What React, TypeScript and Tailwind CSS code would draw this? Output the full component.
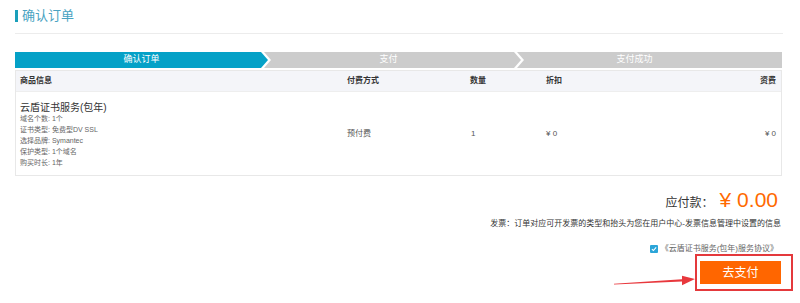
import React from "react";

const FONT = '"Liberation Sans","Noto Sans CJK SC",sans-serif';

export default function App() {
  return (
    <div
      className="relative w-[800px] h-[303px] overflow-hidden bg-white text-[#333]"
      style={{ fontFamily: FONT }}
    >
      <div className="pl-[15px] w-[782px]">
        {/* Title */}
        <div className="pt-[8px] flex items-center h-[24px] gap-[4px]">
          <div className="w-[3px] h-[12px] bg-[#1a9fba]" />
          <span className="text-[13px] leading-[16px] text-[#4aa3c2]">确认订单</span>
        </div>
        <div className="mt-[9px] h-px bg-[#ececec] w-[768px]" />

        {/* Steps */}
        <div className="mt-[18px] flex h-[16px] w-[767px] text-[9px] text-white">
          <div
            className="w-[253px] h-full bg-[#05a1c7] flex items-center justify-center"
            style={{ clipPath: "polygon(0 0, calc(100% - 7px) 0, 100% 50%, calc(100% - 7px) 100%, 0 100%)" }}
          >
            确认订单
          </div>
          <div
            className="-ml-[4px] w-[257px] h-full bg-[#cccccc] flex items-center justify-center pr-[8px]"
            style={{ clipPath: "polygon(0 0, calc(100% - 7px) 0, 100% 50%, calc(100% - 7px) 100%, 0 100%, 7px 50%)" }}
          >
            支付
          </div>
          <div
            className="-ml-[4px] flex-1 h-full bg-[#cccccc] flex items-center justify-center pr-[30px]"
            style={{ clipPath: "polygon(0 0, 100% 0, 100% 100%, 0 100%, 7px 50%)" }}
          >
            支付成功
          </div>
        </div>

        {/* Table */}
        <div className="mt-[2px] w-[767px] border border-[#e8e8e8]">
          <div className="grid grid-cols-[326px_123px_76px_1fr_auto] h-[20px] items-center bg-[#f4f5f9] text-[8px] font-semibold text-[#333]">
            <div className="pl-[4px]">商品信息</div>
            <div className="pl-[5px]">付费方式</div>
            <div className="pl-[5px]">数量</div>
            <div className="pl-[5px]">折扣</div>
            <div className="pr-[5px]">资费</div>
          </div>
          <div className="grid grid-cols-[326px_123px_76px_1fr_auto] h-[84px] items-center text-[8px] text-[#555] border-t border-[#eeeeee]">
            <div className="pl-[4px] pt-[2px] text-[#666]">
              <div className="text-[10px] leading-[11px] text-[#333]">云盾证书服务(包年)</div>
              <div className="leading-[11px] text-[7px]">域名个数: 1个</div>
              <div className="leading-[11px] text-[7px]">证书类型: 免费型DV SSL</div>
              <div className="leading-[11px] text-[7px]">选择品牌: Symantec</div>
              <div className="leading-[11px] text-[7px]">保护类型: 1个域名</div>
              <div className="leading-[11px] text-[7px]">购买时长: 1年</div>
            </div>
            <div className="pl-[5px]">预付费</div>
            <div className="pl-[6px]">1</div>
            <div className="pl-[5px]">¥ 0</div>
            <div className="pr-[5px]">¥ 0</div>
          </div>
        </div>

        {/* Summary */}
        <div className="mt-[14px] flex justify-end items-baseline pr-[4px] h-[20px]">
          <span className="text-[12px] text-[#333]">应付款：</span>
          <span className="ml-[6px] text-[21px] leading-[20px] text-[#ff6a00]">¥ 0.00</span>
        </div>
        <div className="mt-[9px] flex justify-end text-[8px] leading-[10px] text-[#333] pr-[1px]">
          发票：订单对应可开发票的类型和抬头为您在用户中心-发票信息管理中设置的信息
        </div>
        <div className="mt-[15px] flex justify-end items-center h-[10px] pr-[4px] gap-[3px]">
          <div className="w-[8px] h-[8px] rounded-[1px] bg-[#2ba5d8] flex items-center justify-center">
            <svg width="6" height="6" viewBox="0 0 10 10">
              <path d="M1.5 5.2 L4 7.6 L8.6 2.4" stroke="white" strokeWidth="1.8" fill="none" />
            </svg>
          </div>
          <span className="text-[8px] text-[#666]">《云盾证书服务(包年)服务协议》</span>
        </div>
        <div className="flex justify-end">
          <div className="-mr-[11px] border-2 border-[#e4393c] pl-[3px] pr-[10px] py-[5px]">
            <div className="w-[81px] h-[23px] bg-[#ff6600] text-white text-[12px] flex items-center justify-center">
              去支付
            </div>
          </div>
        </div>
      </div>

      {/* Annotation arrow */}
      <svg className="absolute left-0 top-0" width="800" height="303" style={{ pointerEvents: "none" }}>
        <polygon
          points="614,283.8 682,279.3 682,275.8 695,279 682,285.2 682,281.6 614,284.6"
          fill="#e8383d"
        />
      </svg>
    </div>
  );
}
